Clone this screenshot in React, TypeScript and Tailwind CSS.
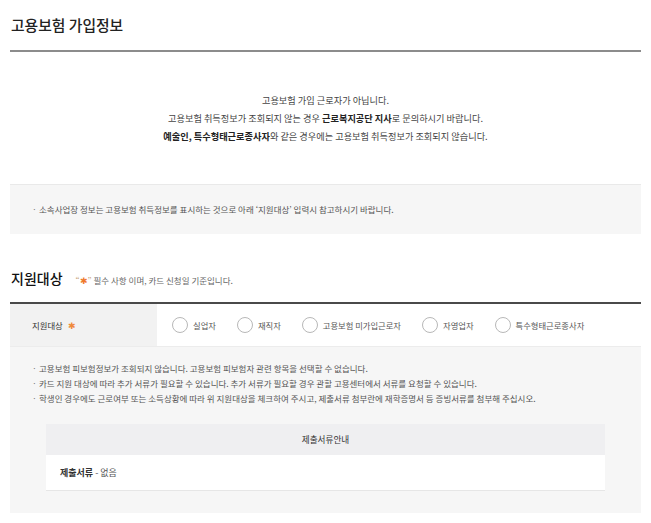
const RADIOS = ['실업자', '재직자', '고용보험 미가입근로자', '자영업자', '특수형태근로종사자'];

const NOTES = [
  '고용보험 피보험정보가 조회되지 않습니다. 고용보험 피보험자 관련 항목을 선택할 수 없습니다.',
  '카드 지원 대상에 따라 추가 서류가 필요할 수 있습니다. 추가 서류가 필요할 경우 관할 고용센터에서 서류를 요청할 수 있습니다.',
  '학생인 경우에도 근로여부 또는 소득상황에 따라 위 지원대상을 체크하여 주시고, 제출서류 첨부란에 재학증명서 등 증빙서류를 첨부해 주십시오.',
];

const Bullet = ({ children }: { children: React.ReactNode }) => (
  <li className="flex items-center leading-[15px]">
    <span className="w-[7px] shrink-0 text-[#777]">·</span>
    <span>{children}</span>
  </li>
);

export default function App() {
  return (
    <div
      className="min-h-[523px] bg-white px-[10px] text-[#333]"
      style={{ fontFamily: '"Noto Sans CJK KR", "Noto Sans", sans-serif' }}
    >
      {/* 고용보험 가입정보 */}
      <div className="border-b-2 border-[#8c8c8c] pt-[15px] pb-[15px]">
        <h1 className="pl-[1px] text-[14.8px] leading-[20px] font-medium text-[#222]">고용보험 가입정보</h1>
      </div>

      <div className="mt-[39px] text-center text-[9.2px] leading-[18px] text-[#444]">
        <p>고용보험 가입 근로자가 아닙니다.</p>
        <p>
          고용보험 취득정보가 조회되지 않는 경우 <b className="font-bold text-[#222]">근로복지공단 지사</b>로 문의하시기 바랍니다.
        </p>
        <p>
          <b className="font-bold text-[#222]">예술인, 특수형태근로종사자</b>와 같은 경우에는 고용보험 취득정보가 조회되지 않습니다.
        </p>
      </div>

      <div className="mt-[39px] flex h-[50px] items-center border-t border-[#e9e9e9] bg-[#f6f6f6] pl-[22px] text-[8.5px] text-[#555]">
        <ul>
          <Bullet>소속사업장 정보는 고용보험 취득정보를 표시하는 것으로 아래 ‘지원대상’ 입력시 참고하시기 바랍니다.</Bullet>
        </ul>
      </div>

      {/* 지원대상 */}
      <div className="mt-[34px] flex items-baseline gap-[13px]">
        <h2 className="pl-[1px] text-[14px] leading-[20px] font-medium text-[#111]">지원대상</h2>
        <p className="text-[8.5px] text-[#666]">
          <span className="text-[#c8a27e]">“</span>
          <span className="text-[#ef7a2d]">✱</span>
          <span className="text-[#c8a27e]">”</span> 필수 사항 이며, 카드 신청일 기준입니다.
        </p>
      </div>

      <div className="mt-[14px] border-t-2 border-[#4a4a4a]">
        <div className="flex h-[43px] border-b border-[#ececec]">
          <div className="flex w-[147px] shrink-0 items-center bg-[#f2f2f2] pl-[22px] text-[8.4px] text-[#333]">
            지원대상 <span className="ml-[5px] text-[8.5px] text-[#ef8a3a]">✱</span>
          </div>
          <div className="flex items-center gap-[21px] pl-[15px] text-[8.3px] text-[#555]">
            {RADIOS.map((r) => (
              <label key={r} className="flex items-center gap-[5px]">
                <span className="h-[16px] w-[16px] rounded-full border border-[#b8b8b8] bg-white" />
                <span>{r}</span>
              </label>
            ))}
          </div>
        </div>

        <div className="bg-[#f6f6f6] px-[22px] pt-[14px] pb-[22px] text-[8.5px] text-[#555]">
          <ul>
            {NOTES.map((n) => (
              <Bullet key={n}>{n}</Bullet>
            ))}
          </ul>

          <div className="mx-[14px] mt-[18px] border-b border-[#e6e6e6]">
            <div className="flex h-[31px] items-center justify-center bg-[#efeff1] text-[8.6px] text-[#333]">제출서류안내</div>
            <div className="flex h-[35px] items-center bg-white pl-[14px] text-[9px] text-[#555]">
              <b className="font-bold text-[#333]">제출서류</b>&nbsp;- 없음
            </div>
          </div>
        </div>
      </div>
    </div>
  );
}
